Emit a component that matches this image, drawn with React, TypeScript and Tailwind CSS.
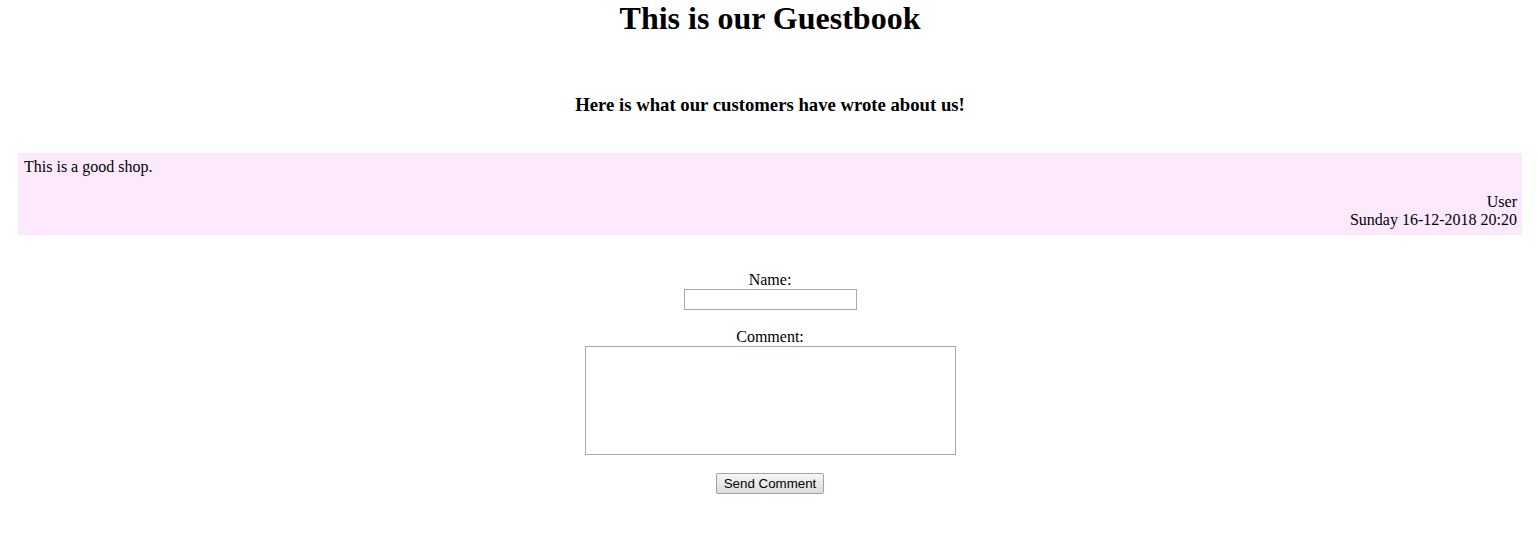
export default function App() {
  return (
    <div className="min-h-[541px] bg-white text-black font-['Liberation_Serif',serif] text-[16px]">
      <div className="ml-[18px] mr-[16px]">
        <h1 className="text-center text-[32px] font-bold leading-[37px]">This is our Guestbook</h1>

        <h3 className="mt-[57px] text-center text-[18.72px] font-bold leading-[22px]">
          Here is what our customers have wrote about us!
        </h3>

        <div className="mt-[37px] bg-[#fde9fe] pt-[5px] pb-[6px] pl-[6px] pr-[5px] leading-[18px]">
          <p>This is a good shop.</p>
          <div className="mt-[17px] text-right">
            <p>User</p>
            <p>Sunday 16-12-2018 20:20</p>
          </div>
        </div>

        <form className="mt-[36px] flex flex-col items-center leading-[18px]">
          <label className="text-center">Name:</label>
          <input
            type="text"
            className="w-[173px] h-[21px] border border-[#a9a9a9] bg-white outline-none"
          />
          <label className="mt-[18px] text-center">Comment:</label>
          <textarea className="w-[371px] h-[109px] border border-[#a9a9a9] bg-white resize-none outline-none" />
          <button
            type="button"
            className="mt-[18px] w-[108px] h-[21px] border border-[#a3a3a3] rounded-[2px] bg-gradient-to-b from-[#f6f6f6] to-[#dcdcdc] font-['Liberation_Sans',sans-serif] text-[13.33px] leading-[19px]"
          >
            Send Comment
          </button>
        </form>
      </div>
    </div>
  );
}
